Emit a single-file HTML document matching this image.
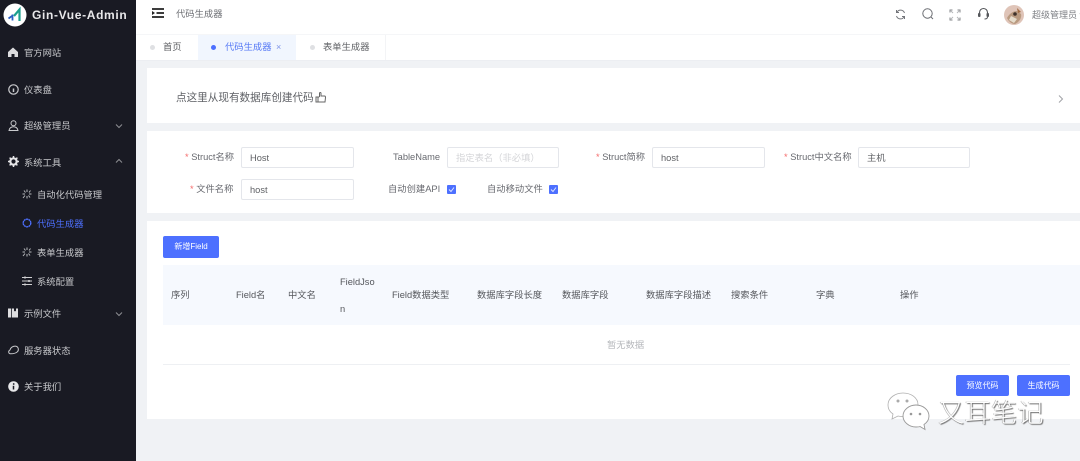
<!DOCTYPE html>
<html lang="zh"><head><meta charset="utf-8"><title>代码生成器</title>
<style>
*{box-sizing:border-box}
html,body{margin:0;padding:0}
body{width:1080px;height:461px;overflow:hidden;position:relative;background:#f0f2f5;font-family:"Liberation Sans","Noto Sans CJK SC",sans-serif;font-size:9.3px;color:#606266}
#page{position:absolute;inset:0;filter:blur(.35px)}
.a{position:absolute;white-space:nowrap;line-height:17px}
.side{position:absolute;left:0;top:0;width:136px;height:461px;background:#191a23}
.m{position:absolute;left:24px;color:#c9cacd;white-space:nowrap;line-height:17px;font-size:9.3px}
.i{position:absolute;overflow:visible}
.card{position:absolute;left:147px;width:933px;background:#fff}
.inp{position:absolute;height:21px;background:#fff;border:1px solid #e4e6eb;border-radius:2px;padding-left:8px;line-height:21px;color:#606266;white-space:nowrap;font-size:9.3px}
.lab{position:absolute;white-space:nowrap;line-height:17px;text-align:right;color:#686a70}
.lab b{color:#f56c6c;font-weight:400}
.cb{position:absolute;width:9px;height:9px;background:#4d70ff;border-radius:1px}
.btn{position:absolute;background:#4d70ff;color:#fff;border-radius:2px;text-align:center;font-size:8px;white-space:nowrap}
.th{position:absolute;white-space:nowrap;line-height:17px;color:#55575c}
</style></head><body><div id="page">
<div class="a" style="left:136px;top:0;width:944px;height:34px;background:#fff"></div>
<div class="a" style="left:136px;top:34px;width:944px;height:27px;background:#fff;border-top:1px solid #f5f6f8;border-bottom:1px solid #eceef2"></div>
<div class="a" style="left:198px;top:35px;width:98px;height:25px;background:#f1f6fe"></div>
<div class="a" style="left:385px;top:35px;width:1px;height:25px;background:#f3f4f6"></div>

<div class="side">
<svg class="i" style="left:3px;top:3px" width="24" height="24" viewBox="0 0 24 24"><circle cx="12" cy="12" r="11.500" fill="#fff"/><path d="M5.500 15.500l3.500-2.500M9.500 11.500v6" stroke="#2a5fc4" stroke-width="1.800" fill="none"/><path d="M11 13l5.500-6.500V18" stroke="#1c9f8e" stroke-width="2.200" fill="none"/></svg>
<div class="a" style="left:32px;top:7px;color:#e8e8ea;font-size:12px;font-weight:700;letter-spacing:.65px">Gin-Vue-Admin</div>

<svg class="i" style="left:8px;top:47px" width="10" height="10" viewBox="0 0 10 10"><path d="M5 .5L10 5v5H6.500V7h-3v3H0V5z" fill="#dcdcde"/></svg>
<div class="m" style="top:45px">官方网站</div>
<svg class="i" style="left:8px;top:84px" width="11" height="11" viewBox="0 0 11 11"><circle cx="5.500" cy="5.500" r="4.700" fill="none" stroke="#c9cacd" stroke-width="1.200"/><path d="M5.500 8V4.500" stroke="#c9cacd" stroke-width="1.500"/></svg>
<div class="m" style="top:82px">仪表盘</div>
<svg class="i" style="left:8px;top:120px" width="11" height="11" viewBox="0 0 11 11"><circle cx="5.500" cy="3.300" r="2.500" fill="none" stroke="#c9cacd"/><path d="M1 10.500c.5-5 8.500-5 9 0z" fill="none" stroke="#c9cacd"/></svg>
<div class="m" style="top:118px">超级管理员</div>
<svg class="i" style="left:115px;top:123px" width="8" height="6" viewBox="0 0 8 6"><path d="M1 1.500l3 3 3-3" fill="none" stroke="#8d8e93"/></svg>
<svg class="i" style="left:8px;top:156px" width="11" height="11" viewBox="0 0 11 11"><circle cx="5.500" cy="5.500" r="3.200" fill="none" stroke="#e4e4e6" stroke-width="2.200"/><path d="M5.500 0v2M5.500 9v2M0 5.500h2M9 5.500h2M1.600 1.600l1.400 1.400M8 8l1.400 1.400M1.600 9.400L3 8M8 3l1.400-1.400" stroke="#e4e4e6" stroke-width="1.500"/></svg>
<div class="m" style="top:155px">系统工具</div>
<svg class="i" style="left:115px;top:158px" width="8" height="6" viewBox="0 0 8 6"><path d="M1 4.500l3-3 3 3" fill="none" stroke="#8d8e93"/></svg>

<svg class="i" style="left:22px;top:189px" width="10" height="10" viewBox="0 0 10 10"><path d="M5 .5v2.500M8.500 1.500L7 3.500M9.500 5H7M8 8.500L6.500 6.500M5 9.500V7M1 9l2-2.500M.5 5H3M2 1.500l1.500 2" stroke="#b8b9bc" fill="none"/></svg>
<div class="m" style="left:37px;top:187px">自动化代码管理</div>
<svg class="i" style="left:22px;top:218px" width="10" height="10" viewBox="0 0 10 10"><circle cx="5" cy="5" r="3.800" fill="none" stroke="#4d70ff" stroke-width="1.400" stroke-dasharray="2 .4"/></svg>
<div class="m" style="left:37px;top:216px;color:#4d70ff">代码生成器</div>
<svg class="i" style="left:22px;top:247px" width="10" height="10" viewBox="0 0 10 10"><path d="M5 .5v2.500M8.500 1.500L7 3.500M9.500 5H7M8 8.500L6.500 6.500M5 9.500V7M1 9l2-2.500M.5 5H3M2 1.500l1.500 2" stroke="#b8b9bc" fill="none"/></svg>
<div class="m" style="left:37px;top:245px">表单生成器</div>
<svg class="i" style="left:22px;top:276px" width="10" height="10" viewBox="0 0 10 10"><path d="M0 1.500h10M0 5h10M0 8.500h10" stroke="#d0d0d2"/><path d="M3 .5v2M7 4v2M3 7.500v2" stroke="#d0d0d2" stroke-width="1.500"/></svg>
<div class="m" style="left:37px;top:274px">系统配置</div>
<svg class="i" style="left:8px;top:308px" width="10" height="10" viewBox="0 0 10 10"><path d="M0 .5h3v9H0zM3.800.5H6v3l1-.7 1 .7v-3h2v9H3.800z" fill="#dedee0"/></svg>
<div class="m" style="top:306px">示例文件</div>
<svg class="i" style="left:115px;top:311px" width="8" height="6" viewBox="0 0 8 6"><path d="M1 1.500l3 3 3-3" fill="none" stroke="#8d8e93"/></svg>
<svg class="i" style="left:8px;top:345px" width="11" height="10" viewBox="0 0 11 10"><path d="M2.500 8.800C.5 8.800 0 6 1.800 5.200 2.500 2.500 5 .8 8 1.200c2.500.5 3 4 1.500 5.500-1.500 1.500-4 2.100-7 2.100z" fill="none" stroke="#c9cacd"/></svg>
<div class="m" style="top:343px">服务器状态</div>
<svg class="i" style="left:8px;top:381px" width="11" height="11" viewBox="0 0 11 11"><circle cx="5.500" cy="5.500" r="5.300" fill="#e8e8ea"/><path d="M5.500 4.800v3.700" stroke="#191a23" stroke-width="1.500"/><circle cx="5.700" cy="3" r=".9" fill="#191a23"/></svg>
<div class="m" style="top:379px">关于我们</div>
</div>

<svg class="i" style="left:152px;top:8px" width="12" height="10" viewBox="0 0 12 10"><path d="M0 1h12M4.500 5H12M0 9h12" stroke="#222" stroke-width="1.800"/><path d="M0 3v4l3-2z" fill="#222"/></svg>
<div class="a" style="left:176px;top:6px;color:#6b6d72">代码生成器</div>

<svg class="i" style="left:895px;top:9px" width="11" height="11" viewBox="0 0 11 11"><path d="M9.500 4A4.200 4.200 0 0 0 2 3M1.500 7A4.200 4.200 0 0 0 9 8" fill="none" stroke="#73757a"/><path d="M1.500 1v2.500H4M9.500 10V7.500H7" fill="none" stroke="#73757a"/></svg>
<svg class="i" style="left:922px;top:8px" width="12" height="12" viewBox="0 0 12 12"><circle cx="5.500" cy="5.500" r="4.700" fill="none" stroke="#6b6d72"/><path d="M9 9l2 2" stroke="#6b6d72"/></svg>
<svg class="i" style="left:950px;top:10px" width="10" height="10" viewBox="0 0 10 10"><path d="M0 2.500V0h2.500M7.500 0H10v2.500M10 7.500V10H7.500M2.500 10H0V7.500" fill="none" stroke="#85878b"/><path d="M1 1l2 2M9 1L7 3M9 9L7 7M1 9l2-2" stroke="#b5b7ba"/></svg>
<svg class="i" style="left:978px;top:8px" width="11" height="12" viewBox="0 0 11 12"><path d="M1.500 6V4.500a4 4 0 0 1 8 0V6" fill="none" stroke="#55575b" stroke-width="1.100"/><rect x="0" y="5" width="2.500" height="4" rx="1" fill="#55575b"/><rect x="8.500" y="5" width="2.500" height="4" rx="1" fill="#55575b"/><path d="M9.500 9c0 1.500-1.500 2-3 2" fill="none" stroke="#55575b"/></svg>
<svg class="i" style="left:1004px;top:5px" width="20" height="20" viewBox="0 0 20 20"><circle cx="10" cy="10" r="10" fill="#dfc4b8"/><path d="M3 13c2-4 6-7 10-7l4 3c1 4-2 8-6 10-3 0-6-2-8-6z" fill="#b99a80"/><path d="M7 11l6 3-3 4-5-3z" fill="#e6dccb"/><circle cx="11" cy="9" r="1.800" fill="#3d3029"/><path d="M13 3l4 4-3 1z" fill="#a36c43"/></svg>
<div class="a" style="left:1032px;top:7px;color:#7d7f84;font-size:9px">超级管理员 ▾</div>

<div class="a" style="left:150px;top:45px;width:5px;height:5px;border-radius:50%;background:#dfe0e3"></div>
<div class="a" style="left:163px;top:39px">首页</div>
<div class="a" style="left:211px;top:45px;width:5px;height:5px;border-radius:50%;background:#4d70ff"></div>
<div class="a" style="left:225px;top:39px;color:#5578f5">代码生成器</div>
<div class="a" style="left:276px;top:39px;color:#7e94e8;font-size:9px">×</div>
<div class="a" style="left:310px;top:45px;width:5px;height:5px;border-radius:50%;background:#dfe0e3"></div>
<div class="a" style="left:323px;top:39px">表单生成器</div>

<div class="card" style="top:68px;height:55px"></div>
<div class="a" style="left:176px;top:90px;font-size:10.600px;color:#5f6166">点这里从现有数据库创建代码</div>
<svg class="i" style="left:315px;top:92px" width="11" height="11" viewBox="0 0 11 11"><path d="M1 5h2v5H1zM3 5.500l1.500-1V1.200c0-1 1.500-1 1.500 0V4h3.500c1 0 1 1 1 1.500L10 10H3" fill="none" stroke="#666"/></svg>
<svg class="i" style="left:1058px;top:95px" width="5" height="8" viewBox="0 0 5 8"><path d="M1 .5L4.500 4 1 7.500" fill="none" stroke="#a0a2a6"/></svg>

<div class="card" style="top:131px;height:82px"></div>
<div class="lab" style="left:185px;top:149px"><b>*</b> Struct名称</div>
<div class="inp" style="left:241px;top:147px;width:113px">Host</div>
<div class="lab" style="left:393px;top:149px">TableName</div>
<div class="inp" style="left:447px;top:147px;width:112px;color:#d4d5d8">指定表名（非必填）</div>
<div class="lab" style="left:596px;top:149px"><b>*</b> Struct简称</div>
<div class="inp" style="left:652px;top:147px;width:113px">host</div>
<div class="lab" style="left:784px;top:149px"><b>*</b> Struct中文名称</div>
<div class="inp" style="left:858px;top:147px;width:112px">主机</div>
<div class="lab" style="left:190px;top:181px"><b>*</b> 文件名称</div>
<div class="inp" style="left:241px;top:179px;width:113px">host</div>
<div class="lab" style="left:388px;top:181px">自动创建API</div>
<div class="cb" style="left:447px;top:185px"></div>
<svg class="i" style="left:447px;top:185px" width="9" height="9" viewBox="0 0 9 9"><path d="M2 4.500l2 2 3-4" fill="none" stroke="#dfe5ff"/></svg>
<div class="lab" style="left:487px;top:181px">自动移动文件</div>
<div class="cb" style="left:549px;top:185px"></div>
<svg class="i" style="left:549px;top:185px" width="9" height="9" viewBox="0 0 9 9"><path d="M2 4.500l2 2 3-4" fill="none" stroke="#dfe5ff"/></svg>

<div class="card" style="top:221px;height:198px"></div>
<div class="btn" style="left:163px;top:236px;width:56px;height:22px;line-height:21px">新增Field</div>
<div class="a" style="left:163px;top:265px;width:917px;height:60px;background:#f6f9fe"></div>
<div class="th" style="left:171px;top:287px">序列</div>
<div class="th" style="left:236px;top:287px">Field名</div>
<div class="th" style="left:288px;top:287px">中文名</div>
<div class="th" style="left:340px;top:274px">FieldJso</div>
<div class="th" style="left:340px;top:301px">n</div>
<div class="th" style="left:392px;top:287px">Field数据类型</div>
<div class="th" style="left:477px;top:287px">数据库字段长度</div>
<div class="th" style="left:562px;top:287px">数据库字段</div>
<div class="th" style="left:646px;top:287px">数据库字段描述</div>
<div class="th" style="left:731px;top:287px">搜索条件</div>
<div class="th" style="left:816px;top:287px">字典</div>
<div class="th" style="left:900px;top:287px">操作</div>
<div class="a" style="left:607px;top:337px;color:#b5b7bb">暂无数据</div>
<div class="a" style="left:163px;top:364px;width:907px;height:1px;background:#eef0f3"></div>
<div class="btn" style="left:956px;top:375px;width:53px;height:21px;line-height:21px">预览代码</div>
<div class="btn" style="left:1017px;top:375px;width:53px;height:21px;line-height:21px">生成代码</div>

<svg class="i" style="left:887px;top:392px" width="46" height="40" viewBox="0 0 46 40"><path d="M16 1C8 1 1 6 1 13c0 4 2 7 5 9l-1 5 6-3c2 .5 3 .7 5 .7 8 0 15-5 15-12S24 1 16 1z" fill="#fff" stroke="#b0b0b0" stroke-width=".8"/><path d="M29 13c-7 0-13 5-13 11s6 11 13 11c2 0 3 0 4-.5l5 3-1-5c3-2 5-5 5-8.500 0-6-6-11-13-11z" fill="#fff" stroke="#999" stroke-width=".9"/><circle cx="11" cy="9" r="1.500" fill="#aaa"/><circle cx="20" cy="9" r="1.500" fill="#aaa"/><circle cx="24" cy="22" r="1.300" fill="#999"/><circle cx="33" cy="22" r="1.300" fill="#999"/></svg>
<div class="a" style="left:938px;top:399px;font-size:26px;line-height:28px;letter-spacing:.5px;color:#fff;font-weight:300;text-shadow:1px 1px 1px #666,-.5px 0 .5px #999">又耳笔记</div>
</div></body></html>
